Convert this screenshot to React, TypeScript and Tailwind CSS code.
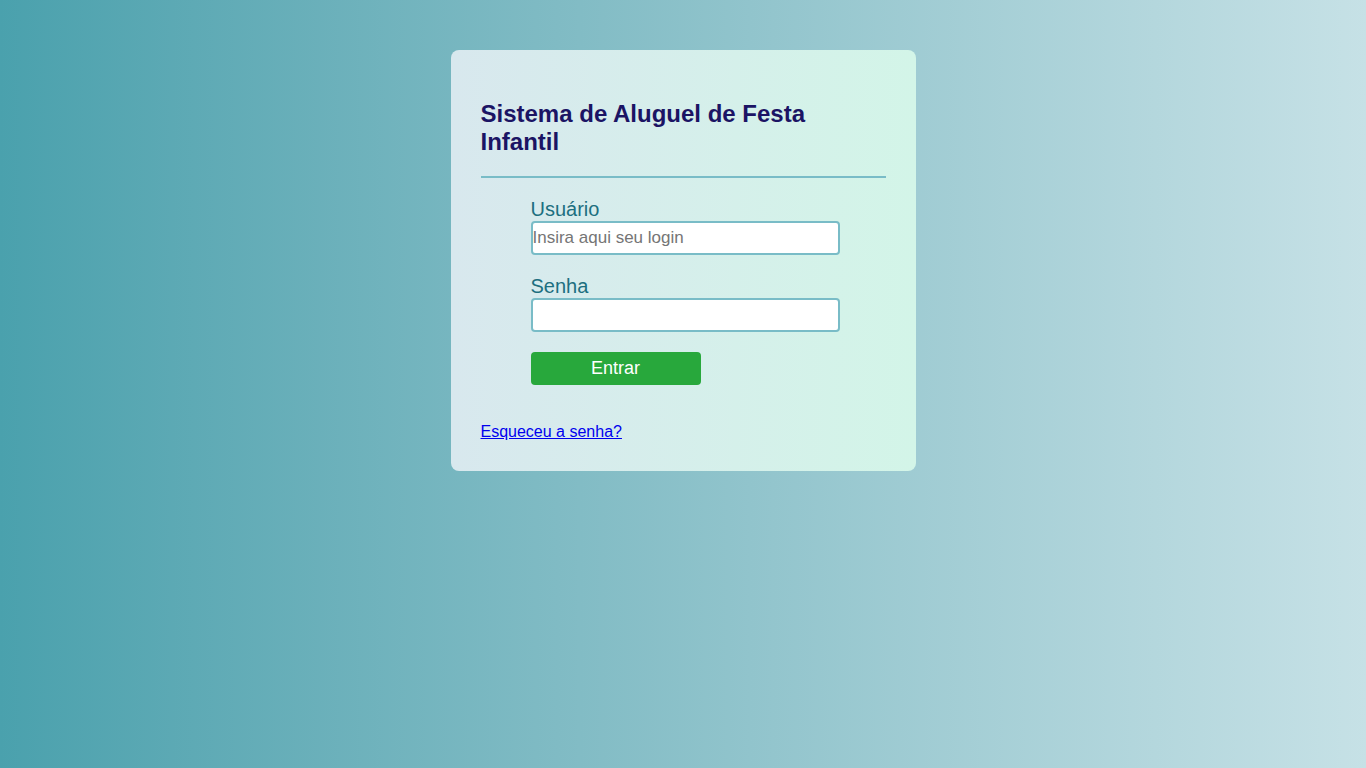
export default function App() {
  return (
    <div className="min-h-screen w-full bg-gradient-to-r from-[#4aa1ad] to-[#c6e1e6] font-['Liberation_Sans',Arial,sans-serif]">
      <div className="flex justify-center pt-[50px]">
        <div className="w-[465px] rounded-lg bg-gradient-to-r from-[#d8e8ee] to-[#d3f5e8] px-[30px] pt-[50px] pb-[27px]">
          <h2 className="text-[24px] font-bold leading-[28px] text-[#1b1464]">
            Sistema de Aluguel de Festa Infantil
          </h2>
          <div className="mt-[20px] h-[2px] bg-[#79bcc7]" />

          <form className="flex flex-col pl-[50px] pt-[20px]">
            <label className="text-[20px] leading-[23px] text-[#1d6f80]">Usuário</label>
            <input
              type="text"
              placeholder="Insira aqui seu login"
              className="h-[34px] w-[309px] rounded-[4px] border-2 border-[#79bcc7] bg-white px-0 text-[17px] text-black placeholder:text-[#757575] outline-none"
            />

            <label className="mt-[20px] text-[20px] leading-[23px] text-[#1d6f80]">Senha</label>
            <input
              type="password"
              className="h-[34px] w-[309px] rounded-[4px] border-2 border-[#79bcc7] bg-white px-0 text-[17px] outline-none"
            />

            <button
              type="button"
              className="mt-[20px] h-[33px] w-[170px] rounded-[4px] bg-[#28a83c] text-[18px] text-white"
            >
              Entrar
            </button>
          </form>

          <div className="mt-[35px]">
            <a href="#" className="text-[16px] leading-[18px] text-[#0000ee] underline">
              Esqueceu a senha?
            </a>
          </div>
        </div>
      </div>
    </div>
  );
}
